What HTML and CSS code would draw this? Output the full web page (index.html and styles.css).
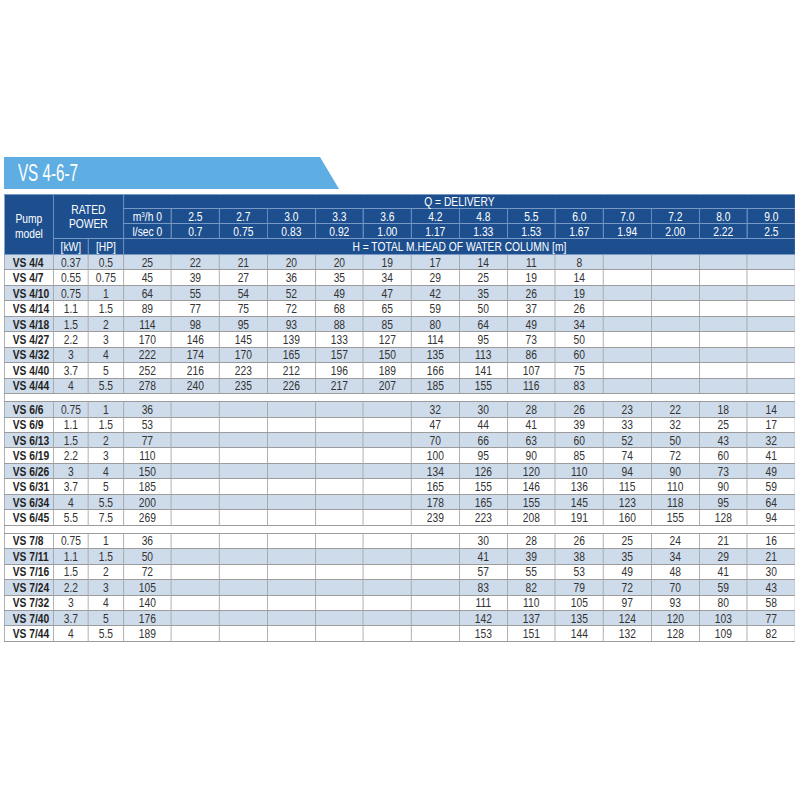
FILE: index.html
```html
<!DOCTYPE html>
<html>
<head>
<meta charset="utf-8">
<link rel="stylesheet" href="styles.css">
</head>
<body>
<div class="page">
  <div class="tab"><span class="tab-title">VS 4-6-7</span></div>
  <div class="table-wrap">
  <table class="perf">
    <colgroup>
      <col class="c-model"><col class="c-pw"><col class="c-pw">
      <col class="c-q"><col class="c-q"><col class="c-q"><col class="c-q"><col class="c-q"><col class="c-q"><col class="c-q">
      <col class="c-q"><col class="c-q"><col class="c-q"><col class="c-q"><col class="c-q"><col class="c-q"><col class="c-q">
    </colgroup>
    <thead>
      <tr class="h1">
        <th rowspan="4" class="pm">Pump<br>model</th>
        <th rowspan="3" colspan="2" class="rp">RATED<br>POWER</th>
        <th colspan="14">Q = DELIVERY</th>
      </tr>
      <tr class="h2">
        <th>m<sup>3</sup>/h 0</th><th>2.5</th><th>2.7</th><th>3.0</th><th>3.3</th><th>3.6</th><th>4.2</th><th>4.8</th><th>5.5</th><th>6.0</th><th>7.0</th><th>7.2</th><th>8.0</th><th>9.0</th>
      </tr>
      <tr class="h3">
        <th>l/sec 0</th><th>0.7</th><th>0.75</th><th>0.83</th><th>0.92</th><th>1.00</th><th>1.17</th><th>1.33</th><th>1.53</th><th>1.67</th><th>1.94</th><th>2.00</th><th>2.22</th><th>2.5</th>
      </tr>
      <tr class="h4">
        <th>[kW]</th><th>[HP]</th>
        <th colspan="14">H = TOTAL M.HEAD OF WATER COLUMN [m]</th>
      </tr>
    </thead>
    <tbody>
      <tr class="b"><td class="m">VS 4/4</td><td>0.37</td><td>0.5</td><td>25</td><td>22</td><td>21</td><td>20</td><td>20</td><td>19</td><td>17</td><td>14</td><td>11</td><td>8</td><td></td><td></td><td></td><td></td></tr>
      <tr><td class="m">VS 4/7</td><td>0.55</td><td>0.75</td><td>45</td><td>39</td><td>27</td><td>36</td><td>35</td><td>34</td><td>29</td><td>25</td><td>19</td><td>14</td><td></td><td></td><td></td><td></td></tr>
      <tr class="b"><td class="m">VS 4/10</td><td>0.75</td><td>1</td><td>64</td><td>55</td><td>54</td><td>52</td><td>49</td><td>47</td><td>42</td><td>35</td><td>26</td><td>19</td><td></td><td></td><td></td><td></td></tr>
      <tr><td class="m">VS 4/14</td><td>1.1</td><td>1.5</td><td>89</td><td>77</td><td>75</td><td>72</td><td>68</td><td>65</td><td>59</td><td>50</td><td>37</td><td>26</td><td></td><td></td><td></td><td></td></tr>
      <tr class="b"><td class="m">VS 4/18</td><td>1.5</td><td>2</td><td>114</td><td>98</td><td>95</td><td>93</td><td>88</td><td>85</td><td>80</td><td>64</td><td>49</td><td>34</td><td></td><td></td><td></td><td></td></tr>
      <tr><td class="m">VS 4/27</td><td>2.2</td><td>3</td><td>170</td><td>146</td><td>145</td><td>139</td><td>133</td><td>127</td><td>114</td><td>95</td><td>73</td><td>50</td><td></td><td></td><td></td><td></td></tr>
      <tr class="b"><td class="m">VS 4/32</td><td>3</td><td>4</td><td>222</td><td>174</td><td>170</td><td>165</td><td>157</td><td>150</td><td>135</td><td>113</td><td>86</td><td>60</td><td></td><td></td><td></td><td></td></tr>
      <tr><td class="m">VS 4/40</td><td>3.7</td><td>5</td><td>252</td><td>216</td><td>223</td><td>212</td><td>196</td><td>189</td><td>166</td><td>141</td><td>107</td><td>75</td><td></td><td></td><td></td><td></td></tr>
      <tr class="b"><td class="m">VS 4/44</td><td>4</td><td>5.5</td><td>278</td><td>240</td><td>235</td><td>226</td><td>217</td><td>207</td><td>185</td><td>155</td><td>116</td><td>83</td><td></td><td></td><td></td><td></td></tr>
      <tr class="gap"><td colspan="17"></td></tr>
      <tr class="b"><td class="m">VS 6/6</td><td>0.75</td><td>1</td><td>36</td><td></td><td></td><td></td><td></td><td></td><td>32</td><td>30</td><td>28</td><td>26</td><td>23</td><td>22</td><td>18</td><td>14</td></tr>
      <tr><td class="m">VS 6/9</td><td>1.1</td><td>1.5</td><td>53</td><td></td><td></td><td></td><td></td><td></td><td>47</td><td>44</td><td>41</td><td>39</td><td>33</td><td>32</td><td>25</td><td>17</td></tr>
      <tr class="b"><td class="m">VS 6/13</td><td>1.5</td><td>2</td><td>77</td><td></td><td></td><td></td><td></td><td></td><td>70</td><td>66</td><td>63</td><td>60</td><td>52</td><td>50</td><td>43</td><td>32</td></tr>
      <tr><td class="m">VS 6/19</td><td>2.2</td><td>3</td><td>110</td><td></td><td></td><td></td><td></td><td></td><td>100</td><td>95</td><td>90</td><td>85</td><td>74</td><td>72</td><td>60</td><td>41</td></tr>
      <tr class="b"><td class="m">VS 6/26</td><td>3</td><td>4</td><td>150</td><td></td><td></td><td></td><td></td><td></td><td>134</td><td>126</td><td>120</td><td>110</td><td>94</td><td>90</td><td>73</td><td>49</td></tr>
      <tr><td class="m">VS 6/31</td><td>3.7</td><td>5</td><td>185</td><td></td><td></td><td></td><td></td><td></td><td>165</td><td>155</td><td>146</td><td>136</td><td>115</td><td>110</td><td>90</td><td>59</td></tr>
      <tr class="b"><td class="m">VS 6/34</td><td>4</td><td>5.5</td><td>200</td><td></td><td></td><td></td><td></td><td></td><td>178</td><td>165</td><td>155</td><td>145</td><td>123</td><td>118</td><td>95</td><td>64</td></tr>
      <tr><td class="m">VS 6/45</td><td>5.5</td><td>7.5</td><td>269</td><td></td><td></td><td></td><td></td><td></td><td>239</td><td>223</td><td>208</td><td>191</td><td>160</td><td>155</td><td>128</td><td>94</td></tr>
      <tr class="gap"><td colspan="17"></td></tr>
      <tr><td class="m">VS 7/8</td><td>0.75</td><td>1</td><td>36</td><td></td><td></td><td></td><td></td><td></td><td></td><td>30</td><td>28</td><td>26</td><td>25</td><td>24</td><td>21</td><td>16</td></tr>
      <tr class="b"><td class="m">VS 7/11</td><td>1.1</td><td>1.5</td><td>50</td><td></td><td></td><td></td><td></td><td></td><td></td><td>41</td><td>39</td><td>38</td><td>35</td><td>34</td><td>29</td><td>21</td></tr>
      <tr><td class="m">VS 7/16</td><td>1.5</td><td>2</td><td>72</td><td></td><td></td><td></td><td></td><td></td><td></td><td>57</td><td>55</td><td>53</td><td>49</td><td>48</td><td>41</td><td>30</td></tr>
      <tr class="b"><td class="m">VS 7/24</td><td>2.2</td><td>3</td><td>105</td><td></td><td></td><td></td><td></td><td></td><td></td><td>83</td><td>82</td><td>79</td><td>72</td><td>70</td><td>59</td><td>43</td></tr>
      <tr><td class="m">VS 7/32</td><td>3</td><td>4</td><td>140</td><td></td><td></td><td></td><td></td><td></td><td></td><td>111</td><td>110</td><td>105</td><td>97</td><td>93</td><td>80</td><td>58</td></tr>
      <tr class="b"><td class="m">VS 7/40</td><td>3.7</td><td>5</td><td>176</td><td></td><td></td><td></td><td></td><td></td><td></td><td>142</td><td>137</td><td>135</td><td>124</td><td>120</td><td>103</td><td>77</td></tr>
      <tr><td class="m">VS 7/44</td><td>4</td><td>5.5</td><td>189</td><td></td><td></td><td></td><td></td><td></td><td></td><td>153</td><td>151</td><td>144</td><td>132</td><td>128</td><td>109</td><td>82</td></tr>
    </tbody>
  </table>
  </div>
</div>
</body>
</html>
```
FILE: styles.css
```css
html, body {
  margin: 0;
  padding: 0;
  background: #ffffff;
}
.page {
  padding: 157px 0 0 4px;
  font-family: "Liberation Sans", Arial, sans-serif;
}
.tab {
  width: 335px;
  height: 32px;
  background: #5eaee3;
  clip-path: polygon(0 0, 316px 0, 100% 100%, 0 100%);
  display: flex;
  align-items: center;
  padding-left: 14px;
  box-sizing: border-box;
}
.tab-title {
  display: inline-block;
  color: #ffffff;
  font-size: 23px;
  line-height: 24px;
  transform: scaleX(0.66);
  transform-origin: 0 50%;
  white-space: nowrap;
}
.table-wrap {
  margin-top: 5px;
  width: 791px;
  overflow: hidden;
}
.perf {
  width: 1001.3px;
  border-collapse: collapse;
  table-layout: fixed;
  font-size: 13px;
  transform: scaleX(0.79);
  transform-origin: 0 0;
  white-space: nowrap;
}
.c-model { width: 62.03px; }
.c-pw { width: 44.3px; }
.c-q { width: 60.76px; }
.perf th {
  background: #1d4f8f;
  color: #ffffff;
  font-weight: normal;
  border: 1px solid #7898c6;
  padding: 0;
  line-height: 13px;
  text-align: center;
}
.perf th sup {
  font-size: 8px;
  line-height: 0;
  vertical-align: 4px;
}
.perf th.pm {
  line-height: 15px;
  padding-top: 2px;
}
.perf th.rp {
  line-height: 14px;
  padding-top: 1px;
}
.h1 { height: 13px; }
.h2 { height: 15px; }
.h3 { height: 15px; }
.h4 { height: 16px; }
.perf tbody tr { height: 15.46px; }
.perf td {
  border: 1px solid #9c9c9c;
  padding: 0;
  text-align: center;
  color: #333333;
  line-height: 13px;
  background: #ffffff;
}
.perf tr.b td {
  background: #cedbea;
}
.perf td.m {
  text-align: left;
  padding-left: 10px;
  font-weight: bold;
  color: #1f1f1f;
}
.perf tr.gap { height: 8px; }
.perf tr.gap td {
  background: #ffffff;
}
```
